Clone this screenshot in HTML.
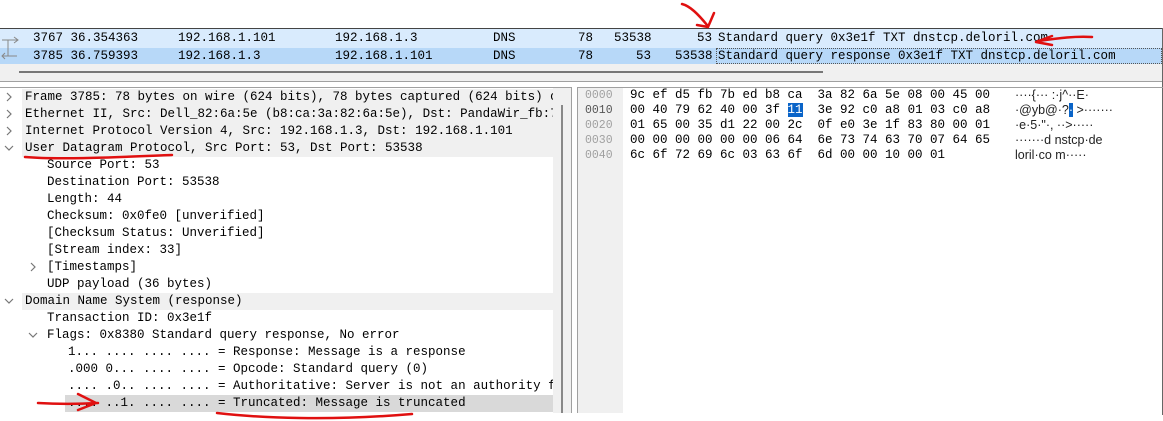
<!DOCTYPE html>
<html><head><meta charset="utf-8"><style>
*{margin:0;padding:0;box-sizing:border-box}
body{width:1163px;height:421px;background:#fff;position:relative;overflow:hidden;font-family:"Liberation Mono",monospace;font-size:12.5px;color:#000}
.a{position:absolute;white-space:pre;line-height:17px}
.t{position:absolute;white-space:pre;height:17px;line-height:17px}
.g{color:#a0a0a0}
.c{position:absolute;white-space:pre}
</style></head><body>
<!-- packet list -->
<div style="position:absolute;left:0;top:28px;width:1163px;height:1px;background:#444"></div>
<div style="position:absolute;left:1162px;top:28px;width:1px;height:387px;background:#666"></div>
<div style="position:absolute;left:0;top:29px;width:1162px;height:19px;background:#d9ebfd"></div>
<div style="position:absolute;left:0;top:48px;width:1162px;height:16px;background:#b7d8f8"></div>
<div style="position:absolute;left:0;top:64px;width:1162px;height:18px;background:#f0f0f0;border-bottom:1px solid #a0a0a0"></div>
<div style="position:absolute;left:19px;top:71px;width:804px;height:2px;background:#777"></div>
<svg style="position:absolute;left:0;top:29px" width="20" height="36"><path d="M2 11H18M14 8l4 3-4 3M8 11V27M2 27H17M5 24l-3 3 3 3" stroke="#888" stroke-width="1" fill="none"/></svg>
<div style="position:absolute;left:0;top:29px;height:19px;line-height:19px;width:1162px">
<span class="c" style="left:33px">3767 36.354363</span><span class="c" style="left:178px">192.168.1.101</span><span class="c" style="left:335px">192.168.1.3</span><span class="c" style="left:493px">DNS</span><span class="c" style="left:578px">78</span><span class="c" style="left:614px">53538</span><span class="c" style="left:697px">53</span><span class="c" style="left:718px">Standard query 0x3e1f TXT dnstcp.deloril.com</span></div>
<div style="position:absolute;left:0;top:48px;height:16px;line-height:16px;width:1162px">
<span class="c" style="left:33px">3785 36.759393</span><span class="c" style="left:178px">192.168.1.3</span><span class="c" style="left:335px">192.168.1.101</span><span class="c" style="left:493px">DNS</span><span class="c" style="left:578px">78</span><span class="c" style="left:636px">53</span><span class="c" style="left:675px">53538</span><span class="c" style="left:718px">Standard query response 0x3e1f TXT dnstcp.deloril.com</span></div>
<div style="position:absolute;left:716px;top:48px;width:446px;height:16px;border:1px dotted #555"></div>
<!-- left tree panel -->
<div style="position:absolute;left:0;top:87px;width:572px;height:326px;border:1px solid #a0a0a0;border-left:none;border-bottom:none"></div>
<div style="position:absolute;left:22px;top:89px;width:531px;height:68px;background:#f0f0f0"></div>
<div style="position:absolute;left:22px;top:293px;width:531px;height:17px;background:#f0f0f0"></div>
<div style="position:absolute;left:65px;top:395px;width:488px;height:17px;background:#d9d9d9"></div>
<svg style="position:absolute;left:0;top:0" width="40" height="420"><g stroke="#777" stroke-width="1.2" fill="none">
<path d="M7 93l4 4-4 4M7 110l4 4-4 4M7 127l4 4-4 4M5 146l4 4 4-4M5 299l4 4 4-4M31 263l4 4-4 4M29 333l4 4 4-4"/></g></svg>
<div class="t" style="left:25px;top:89px;width:528px;overflow:hidden">Frame 3785: 78 bytes on wire (624 bits), 78 bytes captured (624 bits) o</div>
<div class="t" style="left:25px;top:106px;width:528px;overflow:hidden">Ethernet II, Src: Dell_82:6a:5e (b8:ca:3a:82:6a:5e), Dst: PandaWir_fb:7</div>
<div class="t" style="left:25px;top:123px">Internet Protocol Version 4, Src: 192.168.1.3, Dst: 192.168.1.101</div>
<div class="t" style="left:25px;top:140px">User Datagram Protocol, Src Port: 53, Dst Port: 53538</div>
<div class="a" style="left:47px;top:157px">Source Port: 53
Destination Port: 53538
Length: 44
Checksum: 0x0fe0 [unverified]
[Checksum Status: Unverified]
[Stream index: 33]
[Timestamps]
UDP payload (36 bytes)</div>
<div class="t" style="left:25px;top:293px">Domain Name System (response)</div>
<div class="a" style="left:47px;top:310px">Transaction ID: 0x3e1f
Flags: 0x8380 Standard query response, No error</div>
<div class="a" style="left:68px;top:344px;width:485px;overflow:hidden">1... .... .... .... = Response: Message is a response
.000 0... .... .... = Opcode: Standard query (0)
.... .0.. .... .... = Authoritative: Server is not an authority f
.... ..1. .... .... = Truncated: Message is truncated</div>
<div style="position:absolute;left:553px;top:88px;width:18px;height:325px;background:#f0f0f0"></div>
<div style="position:absolute;left:561px;top:105px;width:2px;height:308px;background:#888"></div>
<!-- right hex panel -->
<div style="position:absolute;left:577px;top:87px;width:586px;height:326px;border-left:1px solid #a0a0a0;border-top:1px solid #a0a0a0"></div>
<div style="position:absolute;left:578px;top:88px;width:45px;height:325px;background:#f0f0f0"></div>
<div class="a" style="left:630px;top:88px;line-height:15px">9c ef d5 fb 7b ed b8 ca  3a 82 6a 5e 08 00 45 00
00 40 79 62 40 00 3f <span style="background:#0a64c8;color:#fff">11</span>  3e 92 c0 a8 01 03 c0 a8
01 65 00 35 d1 22 00 2c  0f e0 3e 1f 83 80 00 01
00 00 00 00 00 00 06 64  6e 73 74 63 70 07 64 65
6c 6f 72 69 6c 03 63 6f  6d 00 00 10 00 01</div>
<div class="a" style="left:585px;top:88px;line-height:15px;font-size:11.5px"><span class="g">0000</span>
<span style="color:#555">0010</span>
<span class="g">0020</span>
<span class="g">0030</span>
<span class="g">0040</span></div>
<div class="a" style="left:1015px;top:88px;line-height:15px;font-family:'Liberation Sans',sans-serif;font-size:12.5px;color:#222">····{··· :·j^··E·
·@yb@·?<span style="background:#0a64c8;color:#fff">·</span> &gt;·······
·e·5·"·, ··&gt;·····
·······d nstcp·de
loril·co m·····</div>
<!-- red annotations -->
<svg style="position:absolute;left:0;top:0" width="1163" height="421"><g stroke="#e01010" stroke-width="2.5" fill="none" stroke-linecap="round" stroke-linejoin="round">
<path d="M682 4C690 6 698 14 707 25M697 25L708 27L714 13"/>
<path d="M1092 37C1075 36 1060 38 1038 41M1052 36L1036 42L1052 45"/>
<path d="M25 157C60 160 120 157 172 155"/>
<path d="M38 403C55 404 80 404 98 403M78 394L96 403L78 410"/>
<path d="M217 413C260 418 330 421 412 414"/>
</g></svg>
</body></html>
